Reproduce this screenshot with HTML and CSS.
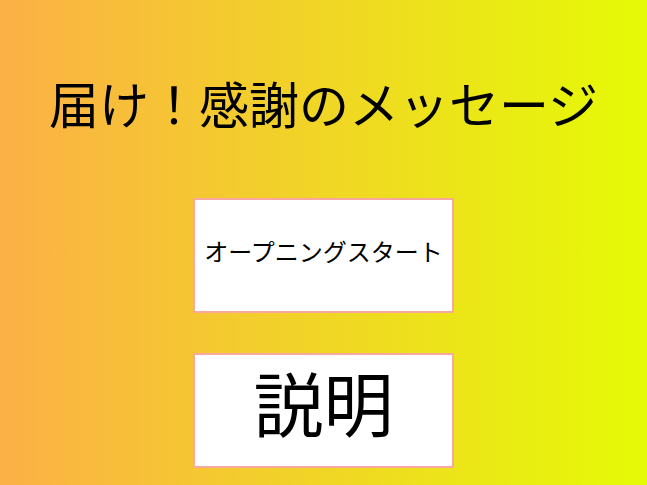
FILE: index.html
```html
<!DOCTYPE html>
<html lang="ja">
<head>
<meta charset="utf-8">
<link rel="stylesheet" href="styles.css">
</head>
<body>
<main class="page">
  <h1 class="title">届け！感謝のメッセージ</h1>
  <div class="menu">
    <button class="btn btn-small">オープニングスタート</button>
    <button class="btn btn-large">説明</button>
  </div>
</main>
</body>
</html>
```
FILE: styles.css
```css
html, body {
  margin: 0;
  padding: 0;
}
body {
  width: 647px;
  height: 485px;
  overflow: hidden;
  background: linear-gradient(to right, #fcb046, #e5fb05);
  font-family: "Noto Sans CJK JP", "Noto Sans", sans-serif;
  color: #000;
}
.page {
  display: flex;
  flex-direction: column;
  align-items: center;
  padding-top: 72px;
}
.title {
  margin: 0;
  font-size: 50px;
  font-weight: 400;
  line-height: 60px;
  height: 60px;
  white-space: nowrap;
}
.menu {
  display: flex;
  flex-direction: column;
  gap: 40px;
  margin-top: 66px;
}
.btn {
  box-sizing: border-box;
  width: 261px;
  height: 115px;
  background: #fff;
  border: 2px solid #f8a8a0;
  padding: 0;
  font-family: "Noto Sans CJK JP", "Noto Sans", sans-serif;
  color: #000;
  display: flex;
  align-items: center;
  justify-content: center;
  white-space: nowrap;
}
.btn-small {
  font-size: 24px;
  padding-bottom: 11px;
}
.btn-large {
  font-size: 70px;
  padding-bottom: 18px;
}
```
